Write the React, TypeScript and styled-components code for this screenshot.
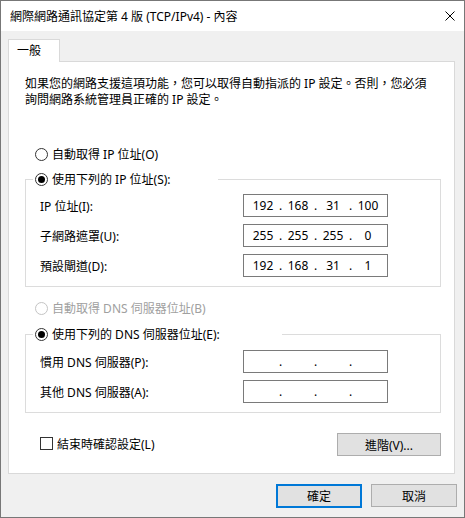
import { Fragment } from 'react'
import styled, { createGlobalStyle } from 'styled-components'

const GlobalStyle = createGlobalStyle`
  html, body {
    margin: 0;
    padding: 0;
    background: #ffffff;
  }
  * {
    box-sizing: border-box;
  }
`

const Window = styled.div`
  width: 465px;
  height: 518px;
  display: flex;
  flex-direction: column;
  border: 1px solid #777777;
  background-color: #f0f0f0;
  font-family: 'Noto Sans', 'Noto Sans CJK TC', sans-serif;
  font-size: 12px;
  color: #000000;
`

const TitleBar = styled.div`
  height: 30px;
  display: flex;
  align-items: center;
  justify-content: space-between;
  padding: 0 9px 1px 9px;
  background-color: #ffffff;
`

const Title = styled.span`
  white-space: nowrap;
`

const CloseIcon = styled.svg`
  display: block;
`

const Body = styled.div`
  flex: 1;
  display: flex;
  flex-direction: column;
  padding: 8px 7px 0 7px;
`

const Tab = styled.div`
  width: 52px;
  height: 23px;
  display: flex;
  align-items: center;
  padding: 0 0 2px 8px;
  margin-bottom: -1px;
  position: relative;
  z-index: 1;
  background-color: #ffffff;
  border: 1px solid #d9d9d9;
  border-bottom: none;
`

const Panel = styled.div`
  height: 413px;
  margin-right: 2px;
  display: flex;
  flex-direction: column;
  background-color: #ffffff;
  border: 1px solid #d9d9d9;
`

const Description = styled.p`
  margin: 14px 16px 0 16px;
  line-height: 16px;
  white-space: nowrap;
`

const OptionRow = styled.div<{ $top: number }>`
  height: 18px;
  margin: ${({ $top }) => $top}px 0 0 26px;
  display: flex;
  align-items: center;
`

const RadioLabel = styled.span<{ $disabled?: boolean }>`
  display: flex;
  align-items: center;
  gap: 4px;
  height: 18px;
  white-space: nowrap;
  color: ${({ $disabled }) => ($disabled ? '#a0a0a0' : '#000000')};
`

const RadioCircle = styled.span<{ $checked?: boolean; $disabled?: boolean }>`
  width: 13px;
  height: 13px;
  flex: none;
  border-radius: 50%;
  border: 1px solid ${({ $disabled }) => ($disabled ? '#c4c4c4' : '#333333')};
  background-color: #ffffff;
  display: flex;
  align-items: center;
  justify-content: center;

  &::after {
    content: '';
    display: ${({ $checked }) => ($checked ? 'block' : 'none')};
    width: 7px;
    height: 7px;
    border-radius: 50%;
    background-color: #000000;
  }
`

const Group = styled.fieldset<{ $top: number; $inner: number }>`
  margin: ${({ $top }) => $top}px 13px 0 16px;
  padding: ${({ $inner }) => $inner}px 0 9px 0;
  min-inline-size: 0;
  border: 1px solid #dcdcdc;
  display: flex;
  flex-direction: column;
  gap: 7px;
`

const Legend = styled.legend<{ $width: number }>`
  width: ${({ $width }) => $width}px;
  height: 18px;
  margin-left: 7px;
  padding: 0 0 0 2px;
`

const FieldRow = styled.div`
  display: flex;
  align-items: center;
  padding-left: 14px;
`

const FieldLabel = styled.span`
  width: 203px;
  white-space: nowrap;
`

const AddressBox = styled.div`
  width: 145px;
  height: 23px;
  display: flex;
  align-items: center;
  padding: 0 5px;
  border: 1px solid #7a7a7a;
  background-color: #ffffff;
`

const Octet = styled.span`
  width: 28px;
  text-align: center;
`

const Dot = styled.span`
  width: 7px;
  text-align: center;
`

const BottomRow = styled.div`
  margin: 20px 13px 0 31px;
  display: flex;
  align-items: center;
  justify-content: space-between;
`

const CheckLabel = styled.span`
  display: flex;
  align-items: center;
  gap: 4px;
  margin-top: -2px;
`

const CheckBox = styled.span`
  width: 13px;
  height: 13px;
  border: 1px solid #333333;
  background-color: #ffffff;
`

const Button = styled.button<{ $width: number; $primary?: boolean }>`
  width: ${({ $width }) => $width}px;
  height: ${({ $primary }) => ($primary ? 24 : 23)}px;
  padding: 0;
  font: inherit;
  color: #000000;
  background-color: #e1e1e1;
  border: ${({ $primary }) => ($primary ? '2px solid #0078d7' : '1px solid #adadad')};
`

const Footer = styled.div`
  margin-top: 10px;
  display: flex;
  justify-content: flex-end;
  gap: 9px;
`

const AddressInput = ({ parts }: { parts: string[] }) => (
  <AddressBox>
    {parts.map((p, i) => (
      <Fragment key={i}>
        {i > 0 && <Dot>.</Dot>}
        <Octet>{p}</Octet>
      </Fragment>
    ))}
  </AddressBox>
)

const ipRows = [
  { label: 'IP 位址(I):', parts: ['192', '168', '31', '100'] },
  { label: '子網路遮罩(U):', parts: ['255', '255', '255', '0'] },
  { label: '預設閘道(D):', parts: ['192', '168', '31', '1'] },
]

const dnsRows = [
  { label: '慣用 DNS 伺服器(P):', parts: ['', '', '', ''] },
  { label: '其他 DNS 伺服器(A):', parts: ['', '', '', ''] },
]

const App = () => {
  return (
    <Window>
      <GlobalStyle />
      <TitleBar>
        <Title>網際網路通訊協定第 4 版 (TCP/IPv4) - 內容</Title>
        <CloseIcon width='10' height='10' viewBox='0 0 10 10'>
          <path d='M0.5 0.5 L9.5 9.5 M9.5 0.5 L0.5 9.5' stroke='#000' strokeWidth='1' />
        </CloseIcon>
      </TitleBar>
      <Body>
        <Tab>一般</Tab>
        <Panel>
          <Description>
            如果您的網路支援這項功能，您可以取得自動指派的 IP 設定。否則，您必須
            <br />
            詢問網路系統管理員正確的 IP 設定。
          </Description>

          <OptionRow $top={37}>
            <RadioLabel>
              <RadioCircle />
              自動取得 IP 位址(O)
            </RadioLabel>
          </OptionRow>

          <Group $top={7} $inner={6}>
            <Legend $width={185}>
              <RadioLabel>
                <RadioCircle $checked />
                使用下列的 IP 位址(S):
              </RadioLabel>
            </Legend>
            {ipRows.map(row => (
              <FieldRow key={row.label}>
                <FieldLabel>{row.label}</FieldLabel>
                <AddressInput parts={row.parts} />
              </FieldRow>
            ))}
          </Group>

          <OptionRow $top={12}>
            <RadioLabel $disabled>
              <RadioCircle $disabled />
              自動取得 DNS 伺服器位址(B)
            </RadioLabel>
          </OptionRow>

          <Group $top={8} $inner={7}>
            <Legend $width={249}>
              <RadioLabel>
                <RadioCircle $checked />
                使用下列的 DNS 伺服器位址(E):
              </RadioLabel>
            </Legend>
            {dnsRows.map(row => (
              <FieldRow key={row.label}>
                <FieldLabel>{row.label}</FieldLabel>
                <AddressInput parts={row.parts} />
              </FieldRow>
            ))}
          </Group>

          <BottomRow>
            <CheckLabel>
              <CheckBox />
              結束時確認設定(L)
            </CheckLabel>
            <Button $width={104}>進階(V)...</Button>
          </BottomRow>
        </Panel>
        <Footer>
          <Button $width={86} $primary>
            確定
          </Button>
          <Button $width={86}>取消</Button>
        </Footer>
      </Body>
    </Window>
  )
}

export default App
